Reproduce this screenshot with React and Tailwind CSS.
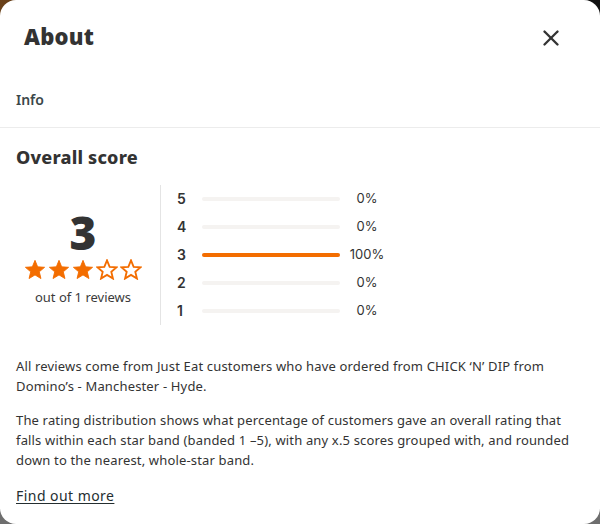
import { X } from 'lucide-react'

const rows = [
  { n: 5, pct: 0 },
  { n: 4, pct: 0 },
  { n: 3, pct: 100 },
  { n: 2, pct: 0 },
  { n: 1, pct: 0 },
]

// 별 하나 (채움 / 외곽선)
function StarIcon({ filled }) {
  return (
    <svg width="22" height="21" viewBox="0 0 24 23">
      <polygon
        points="12,1.5 14.9,8.6 22.5,9.1 16.7,14 18.5,21.4 12,17.4 5.5,21.4 7.3,14 1.5,9.1 9.1,8.6"
        fill={filled ? '#f36d00' : '#ffffff'}
        stroke="#f36d00"
        strokeWidth={filled ? 1 : 2}
        strokeLinejoin="miter"
      />
    </svg>
  )
}

export default function App() {
  return (
    <div className="w-[600px] h-[524px] bg-[linear-gradient(100deg,#6a4119_0%,#111111_60%)]">
      <div className="w-full h-full bg-[linear-gradient(to_bottom,transparent_0%,transparent_50%,#6e6e6e_50%)]">
        <div
          className="w-full h-full bg-white rounded-2xl flex flex-col text-[#242e30]"
          style={{ fontFamily: '"Noto Sans", "Liberation Sans", sans-serif' }}
        >
          {/* 헤더 */}
          <div className="h-[72px] flex items-center justify-between pl-6 pr-[36px] shrink-0">
            <h2 className="text-[22px] leading-7 font-black tracking-[0.2px] text-[#333]">About</h2>
            <X size={26} strokeWidth={2.2} className="text-[#333] mt-1" />
          </div>

          {/* 탭 */}
          <div className="h-[56px] flex items-center px-4 border-b border-[#ececec] shrink-0">
            <span className="text-[14px] font-semibold text-[#3b474a]">Info</span>
          </div>

          <div className="px-4 pt-[17px]">
            <h3 className="text-[18px] leading-6 font-extrabold tracking-[0.2px] text-[#333]">Overall score</h3>

            {/* 점수 + 분포 */}
            <div className="flex mt-[16px] h-[140px]">
              <div className="w-[134px] mr-[10px] flex flex-col items-center pt-[23px]">
                <div className="text-[46px] leading-[48px] font-black text-[#333]">3</div>
                <div className="flex gap-[2px] mt-[3px]">
                  <StarIcon filled />
                  <StarIcon filled />
                  <StarIcon filled />
                  <StarIcon />
                  <StarIcon />
                </div>
                <div className="text-[13px] leading-[18px] mt-[8px] text-[#3b3b3b]">out of 1 reviews</div>
              </div>
              <div className="border-l border-[#e4e4e4] pl-[16px] flex flex-col">
                {rows.map((r) => (
                  <div key={r.n} className="h-[28px] flex items-center">
                    <span className="w-[25px] text-[14px] leading-[26px] font-semibold text-[#333]" style={{ fontFamily: 'Inter, sans-serif' }}>{r.n}</span>
                    <div className="w-[138px] h-[4px] rounded-full bg-[#f5f3f1]">
                      <div className="h-full rounded-full bg-[#f36d00]" style={{ width: `${r.pct}%` }}></div>
                    </div>
                    <span className="w-[54px] text-center text-[13px] text-[#333]" style={{ fontFamily: 'Inter, sans-serif' }}>{r.pct}%</span>
                  </div>
                ))}
              </div>
            </div>

            {/* 설명 */}
            <p className="mt-[31px] text-[13px] leading-5 tracking-[0.16px] text-[#333]">
              All reviews come from Just Eat customers who have ordered from CHICK ‘N’ DIP from Domino’s - Manchester - Hyde.
            </p>
            <p className="mt-[14px] text-[13px] leading-5 tracking-[0.16px] text-[#333]">
              The rating distribution shows what percentage of customers gave an overall rating that falls within each star band (banded 1 –5), with any x.5 scores grouped with, and rounded down to the nearest, whole-star band.
            </p>
            <a href="#" className="block mt-[16px] text-[14px] leading-5 tracking-[0.45px] underline underline-offset-2 text-[#242e30]">Find out more</a>
          </div>
        </div>
      </div>
    </div>
  )
}
